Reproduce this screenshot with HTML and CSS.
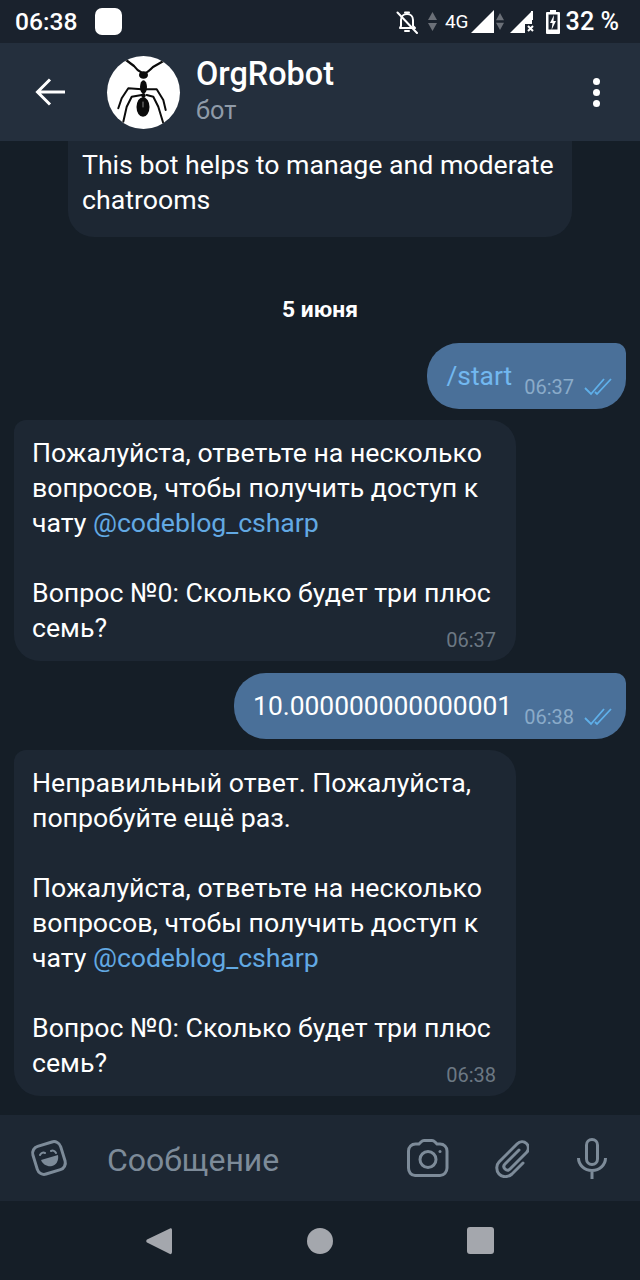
FILE: index.html
```html
<!DOCTYPE html>
<html lang="en">
<head>
  <meta charset="UTF-8" />
  <meta name="viewport" content="width=device-width, initial-scale=1" />
  <title>OrgRobot</title>
  <link rel="stylesheet" href="styles.css">
</head>
<body>
  <div class="status-bar">
    <span class="clock">06:38</span>
    <span class="notif-square"></span>
    <div class="status-icons">
      <svg class="bell" width="24" height="24" viewBox="0 0 24 24" fill="none" stroke="#fff" stroke-width="2" stroke-linejoin="round" stroke-linecap="round">
        <path d="M6 10c0-3.500 2.500-6 6-6s6 2.500 6 6v6l2 2H5l1-2z"/>
        <path d="M10 2.500h4M10 21h4M2.500 2.500 22 23"/>
      </svg>
      <svg class="updown" width="9" height="19" viewBox="0 0 9 19" fill="#6b7078"><path d="M4.500 0 9 8H0zM0 11h9l-4.500 8z"/></svg>
      <span class="net">4G</span>
      <svg class="signal" width="23" height="23" viewBox="0 0 23 23"><path d="M23 0v23H0z" fill="#fff"/></svg>
      <svg class="updown updown-b" width="8" height="19" viewBox="0 0 9 19" fill="#6b7078"><path d="M4.500 0 9 8H0zM0 11h9l-4.500 8z"/></svg>
      <svg class="signal signal-b" width="24" height="23" viewBox="0 0 24 23" fill="none">
        <path d="M22 1 0 23h15v-9h7z" fill="#fff"/>
        <path d="M22 1v9" stroke="#fff" stroke-width="2"/>
        <path d="M18 16l5 5M23 16l-5 5" stroke="#fff" stroke-width="2"/>
      </svg>
      <svg class="battery" width="14" height="24" viewBox="0 0 14 24">
        <path d="M4 0h6v2h3a1 1 0 0 1 1 1v20a1 1 0 0 1-1 1H1a1 1 0 0 1-1-1V3a1 1 0 0 1 1-1h3z" fill="#fff"/>
        <path d="M2.500 4.500h9v15h-9z" fill="#1a222d"/>
        <path d="M8 5 4 13h2.500L5.500 20 10 11H7.500z" fill="#fff"/>
      </svg>
      <span class="percent">32 %</span>
    </div>
  </div>

  <header class="top-bar">
    <svg class="back" width="30" height="28" viewBox="0 0 30 28" fill="none" stroke="#fff" stroke-width="3"><path d="M30 14H3M15 1.500 2.500 14 15 26.500"/></svg>
    <div class="avatar">
      <svg width="73" height="73" viewBox="0 0 73 73" fill="none" stroke="#0b0b0b" stroke-linecap="round" stroke-linejoin="round">
        <path d="M35.700 17.300C31 15 29 13 27 10L15 1M38 17.300c3-1.300 6-4.300 8-6.300L60 3" stroke-width="2.200"/>
        <path d="M34.700 33.300 21.300 32.300 14.700 42.300 11.300 52.300M34.700 39 24.700 40.700 19.700 50.700 16.300 65.700M39.700 33.300 49.700 33.300 56.300 44 58.700 54M39.700 39 46.300 40.700 51.300 50.700 56.300 67.300" stroke-width="2"/>
        <ellipse cx="36.500" cy="19" rx="4.500" ry="3.800" fill="#0b0b0b" stroke="none"/>
        <ellipse cx="36.500" cy="31" rx="3.500" ry="6.800" fill="#0b0b0b" stroke="none"/>
        <ellipse cx="36.500" cy="39.500" rx="2.200" ry="2.500" fill="#0b0b0b" stroke="none"/>
        <ellipse cx="36" cy="51" rx="6.500" ry="9.800" fill="#0b0b0b" stroke="none"/>
        <path d="M36 46v5" stroke="#888" stroke-width="1"/>
      </svg>
    </div>
    <div class="title-box">
      <div class="title">OrgRobot</div>
      <div class="subtitle">бот</div>
    </div>
    <div class="menu-dots"><span></span><span></span><span></span></div>
  </header>

  <main class="chat">
    <div class="bubble bubble-intro">
      <div>This bot helps to manage and moderate</div>
      <div>chatrooms</div>
    </div>

    <div class="date-label">5 июня</div>

    <div class="bubble-out">
      <span class="command">/start</span>
      <span class="meta-out">
        <span class="time-out">06:37</span>
        <svg width="28" height="18" viewBox="0 0 28 18" fill="none" stroke="#5fb0ea" stroke-width="1.800"><path d="M1 10l6 6L20 1M11 14l2 2L27 1"/></svg>
      </span>
    </div>

    <div class="bubble bubble-in">
      <p>
        <span class="line">Пожалуйста, ответьте на несколько</span>
        <span class="line">вопросов, чтобы получить доступ к</span>
        <span class="line"><span>чату</span> <a class="mention">@codeblog_csharp</a></span>
      </p>
      <p>
        <span class="line">Вопрос №0: Сколько будет три плюс</span>
        <span class="line">семь?</span>
      </p>
      <span class="time-in">06:37</span>
    </div>

    <div class="bubble-out">
      <span class="answer">10.000000000000001</span>
      <span class="meta-out">
        <span class="time-out">06:38</span>
        <svg width="28" height="18" viewBox="0 0 28 18" fill="none" stroke="#5fb0ea" stroke-width="1.800"><path d="M1 10l6 6L20 1M11 14l2 2L27 1"/></svg>
      </span>
    </div>

    <div class="bubble bubble-in">
      <p>
        <span class="line">Неправильный ответ. Пожалуйста,</span>
        <span class="line">попробуйте ещё раз.</span>
      </p>
      <p>
        <span class="line">Пожалуйста, ответьте на несколько</span>
        <span class="line">вопросов, чтобы получить доступ к</span>
        <span class="line"><span>чату</span> <a class="mention">@codeblog_csharp</a></span>
      </p>
      <p>
        <span class="line">Вопрос №0: Сколько будет три плюс</span>
        <span class="line">семь?</span>
      </p>
      <span class="time-in">06:38</span>
    </div>
  </main>

  <footer class="input-bar">
    <svg class="emoji" width="40" height="40" viewBox="0 0 40 40" fill="none" stroke="#7d8b99" stroke-width="3" stroke-linecap="round">
      <rect x="5.500" y="5.500" width="29" height="29" rx="7" transform="rotate(-17 20 20)"/>
      <path d="M11 17c1-2 3-3 5-2M22 13c2-1 4 0 5 2" stroke-width="2"/>
      <path d="M12 22l17-5c1 6-2 10-6 11s-9-1-11-6z" fill="#7d8b99" stroke="none"/>
    </svg>
    <span class="placeholder">Сообщение</span>
    <svg class="camera" width="42" height="38" viewBox="0 0 42 38" fill="none" stroke="#7d8b99" stroke-width="3">
      <path d="M12 5l2-2c1-1 2-1.500 3-1.500h8c1 0 2 .5 3 1.500l2 2h3c4 0 7 3 7 7v17c0 4-3 7.500-7 7.500H8c-4 0-6.500-3.500-6.500-7.500V12c0-4 3-7 7-7z"/>
      <circle cx="21" cy="20.500" r="8"/>
      <circle cx="33" cy="12.500" r="1.500" fill="#7d8b99" stroke="none"/>
    </svg>
    <svg class="clip" width="34" height="39" viewBox="0 0 34 39" fill="none" stroke="#7d8b99" stroke-width="3" stroke-linecap="round">
      <path d="M28 24 17 35c-4 3.500-10 3.500-13 0s-3-9 0-12L22 5c3-3 7-3 9.500-.5s2.500 6.500 0 9L15 30c-1.500 1.500-3.500 1.500-5 0s-1.500-3.500 0-5l14-14"/>
    </svg>
    <svg class="mic" width="30" height="41" viewBox="0 0 30 41" fill="none" stroke="#7d8b99" stroke-width="3">
      <rect x="9.500" y="1.500" width="11" height="25" rx="5.500"/>
      <path d="M1.500 20c0 7 6 12.500 13.500 12.500S28.500 27 28.500 20M15 32v9"/>
    </svg>
  </footer>

  <nav class="nav-bar">
    <svg width="26" height="28" viewBox="0 0 26 28"><path d="M24 1.500c1-.5 2 0 2 1.500v22c0 1.500-1 2.500-2 2L1 15.500c-1-.7-1-2 0-3z" fill="#a4a7ad"/></svg>
    <span class="nav-circle"></span>
    <span class="nav-square"></span>
  </nav>
</body>
</html>
```

FILE: styles.css
```css
html, body {
  margin: 0;
  padding: 0;
}
body {
  width: 640px;
  height: 1280px;
  overflow: hidden;
  display: flex;
  flex-direction: column;
  background: #151e27;
  font-family: Roboto, "Noto Sans", sans-serif;
  color: #fff;
}

/* status bar */
.status-bar {
  height: 43px;
  flex: none;
  display: flex;
  align-items: center;
  background: #1a222d;
  padding: 0 21px 0 15px;
}
.clock {
  font-size: 24.600px;
  font-weight: 500;
}
.notif-square {
  width: 27px;
  height: 27px;
  margin-left: 18px;
  background: #fff;
  border-radius: 7px;
}
.status-icons {
  margin-left: auto;
  display: flex;
  align-items: center;
}
.bell {
  margin-right: 9px;
}
.net {
  font-size: 19px;
  margin-left: 8px;
  margin-right: 2px;
}
.updown-b {
  margin-left: 2px;
}
.signal-b {
  margin-left: 6px;
}
.battery {
  margin-left: 12px;
}
.percent {
  font-size: 25.200px;
  font-weight: 500;
  margin-left: 6px;
}

/* header */
.top-bar {
  height: 98px;
  flex: none;
  box-sizing: border-box;
  display: flex;
  align-items: center;
  background: #242f3d;
  padding: 0 0 0 35px;
}
.back {
  flex: none;
}
.avatar {
  width: 73px;
  height: 73px;
  margin-left: 42px;
  border-radius: 50%;
  background: #fff;
  overflow: hidden;
  flex: none;
}
.title-box {
  margin-left: 16px;
}
.title {
  font-size: 32.400px;
  font-weight: 500;
  line-height: 36px;
}
.subtitle {
  font-size: 25.300px;
  line-height: 36px;
  padding-top: 1px;
  color: #8f9ba8;
}
.menu-dots {
  margin-left: auto;
  margin-right: 40px;
  display: flex;
  flex-direction: column;
  gap: 4px;
}
.menu-dots span {
  width: 7px;
  height: 7px;
  border-radius: 50%;
  background: #fff;
}

/* messages */
.chat {
  height: 974px;
  flex: none;
  box-sizing: border-box;
  overflow: hidden;
  display: flex;
  flex-direction: column;
  padding: 0 14px;
}
.bubble {
  background: #1d2733;
  font-size: 26.700px;
  line-height: 35px;
  box-sizing: border-box;
}
.bubble p {
  margin: 0 0 35px;
}
.bubble p:last-of-type {
  margin-bottom: 0;
}
.line {
  display: block;
  white-space: nowrap;
}
.bubble-intro {
  width: 504px;
  margin-left: 54px;
  padding: 7px 14px 19px;
  border-radius: 0 0 26px 26px;
}
.date-label {
  text-align: center;
  font-size: 22.800px;
  font-weight: 700;
  line-height: 26px;
  margin-top: 60px;
}
.bubble-out {
  align-self: flex-end;
  height: 66px;
  margin-top: 20px;
  box-sizing: border-box;
  display: flex;
  background: #4a7099;
  border-radius: 32px 10px 30px 32px;
  padding: 0 14px 0 19px;
  align-items: center;
  font-size: 26.400px;
}
.bubble-in + .bubble-out {
  margin-top: 12px;
}
.command {
  color: #72b8f0;
}
.meta-out {
  display: flex;
  align-items: center;
  margin-left: 12px;
  margin-top: 22px;
}
.time-out {
  font-size: 20px;
  color: #8aabc9;
  margin-right: 10px;
}
.bubble-in {
  position: relative;
  width: 502px;
  margin-top: 11px;
  padding: 16px 20px 15px 18px;
  border-radius: 12px 26px 26px 26px;
}
.mention {
  color: #62a9e3;
  letter-spacing: -0.1px;
}
.time-in {
  position: absolute;
  right: 20px;
  bottom: 9px;
  font-size: 20px;
  line-height: 24px;
  color: #6c7883;
}

/* input */
.input-bar {
  height: 86px;
  flex: none;
  display: flex;
  align-items: center;
  background: #1d2733;
  padding-left: 29px;
}
.placeholder {
  font-size: 32px;
  color: #7d8b99;
  margin-left: 38px;
  margin-top: 3px;
  width: 300px;
}
.clip {
  margin-left: 46px;
}
.mic {
  margin-left: 48px;
}

/* android nav */
.nav-bar {
  height: 79px;
  flex: none;
  display: flex;
  align-items: center;
  padding-left: 146px;
}
.nav-circle {
  width: 26px;
  height: 26px;
  margin-left: 135px;
  border-radius: 50%;
  background: #a4a7ad;
}
.nav-square {
  width: 27px;
  height: 27px;
  margin-left: 134px;
  border-radius: 3px;
  background: #a4a7ad;
}
```
